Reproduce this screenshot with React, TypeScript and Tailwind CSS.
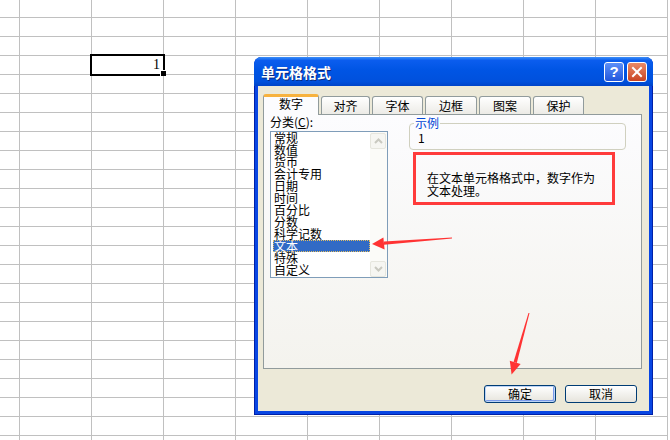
import React from 'react';

const categories = ['常规', '数值', '货币', '会计专用', '日期', '时间', '百分比', '分数', '科学记数', '文本', '特殊', '自定义'];

const tabs = [
  { label: '数字', w: 'w-[56px]', active: true },
  { label: '对齐', w: 'w-[49px]' },
  { label: '字体', w: 'w-[51px]' },
  { label: '边框', w: 'w-[52px]' },
  { label: '图案', w: 'w-[52px]' },
  { label: '保护', w: 'w-[51px]' },
];

const SheetGrid = () => (
  <div className="grid grid-cols-[20px_repeat(9,72px)] grid-rows-[18px_repeat(23,19px)]">
    {Array.from({ length: 240 }).map((_, i) => (
      <div key={i} className="border-r border-b border-[#c0c0c0]" />
    ))}
  </div>
);

const Selection = () => (
  <div className="absolute left-[90px] top-[54px] w-[75px] h-[22px] border-2 border-black flex items-center justify-end pr-[3px] font-['Liberation_Serif',serif] text-[14px] leading-none">
    1
    <div className="absolute left-[68px] top-[14px] w-[6px] h-[6px] bg-black border-l border-t border-white" />
  </div>
);

const ScrollBtn = ({ up }: { up?: boolean }) => (
  <div className="w-[16px] h-[16px] rounded-[2px] border border-[#e6e6de] bg-[#f6f6f2] flex items-center justify-center">
    <svg width="9" height="6" viewBox="0 0 9 6">
      <polyline
        points={up ? '1,5 4.5,1.5 8,5' : '1,1 4.5,4.5 8,1'}
        fill="none"
        stroke="#c9c9c0"
        strokeWidth="2"
      />
    </svg>
  </div>
);

const XpButton = ({ label, primary }: { label: string; primary?: boolean }) => (
  <div
    className={
      primary
        ? 'w-[72px] h-[18px] rounded-[3px] border border-[#003c74] bg-linear-to-b from-white to-[#e6e4dc] flex items-center justify-center text-[12px] leading-none shadow-[inset_0_0_0_1px_#bcd4f6,inset_-1px_-1px_0_1px_#7b9bea]'
        : 'w-[72px] h-[18px] rounded-[3px] border border-[#003c74] bg-linear-to-b from-white to-[#e6e4dc] flex items-center justify-center text-[12px] leading-none'
    }
  >
    {label}
  </div>
);

const TitleBar = () => (
  <div className="h-[29px] rounded-t-[7px] flex items-center pl-[7px] pr-[6px] gap-[3px] bg-[linear-gradient(to_bottom,#3d8ff8_0%,#0b5dee_12%,#0055e4_45%,#0050dc_85%,#0044c8_100%)]">
    <span className="flex-1 text-white font-bold text-[14px] leading-none [text-shadow:1px_1px_0_#0a2a80]">单元格格式</span>
    <div className="w-[20px] h-[20px] rounded-[3px] border border-white bg-linear-to-b from-[#5d8ff8] to-[#2156dc] flex items-center justify-center text-white font-bold text-[15px] leading-none font-['Liberation_Sans',sans-serif]">
      ?
    </div>
    <div className="w-[20px] h-[20px] rounded-[3px] border border-white bg-linear-to-b from-[#ea8a66] to-[#c94320] flex items-center justify-center">
      <svg width="12" height="12" viewBox="0 0 12 12">
        <path d="M2 2 L10 10 M10 2 L2 10" stroke="white" strokeWidth="2" strokeLinecap="square" />
      </svg>
    </div>
  </div>
);

const FormatDialog = () => (
  <div className="absolute left-[254px] top-[57px] w-[399px] h-[358px] flex flex-col rounded-t-[8px] bg-[#0846e3] shadow-[inset_1px_0_0_#0020a8,inset_-1px_0_0_#0020a8,inset_0_-1px_0_#0020a8] font-['Noto_Sans_CJK_SC',sans-serif] text-black">
    <TitleBar />
    <div className="flex-1 px-[4px] pb-[4px]">
      <div className="h-full bg-[#ece9d8] flex flex-col">
        {/* tab strip */}
        <div className="mt-[8px] ml-[5px] h-[20px] flex items-end gap-[2px]">
          {tabs.map((t) =>
            t.active ? (
              <div
                key={t.label}
                className={`${t.w} relative z-10 -mb-px h-[21px] rounded-t-[3px] border-x border-[#919b9c] border-t-[3px] border-t-[#f7b23e] bg-[#fcfcfe] text-center text-[12px] leading-[14px]`}
              >
                {t.label}
              </div>
            ) : (
              <div
                key={t.label}
                className={`${t.w} h-[18px] rounded-t-[3px] border border-b-0 border-[#919b9c] bg-linear-to-b from-white to-[#ecebe6] text-center text-[12px] leading-[17px]`}
              >
                {t.label}
              </div>
            )
          )}
        </div>

        {/* panel */}
        <div className="ml-[5px] w-[379px] h-[255px] border border-[#919b9c] bg-linear-to-b from-[#fcfcfe] to-[#f4f3ee] flex items-start">
          <div className="ml-[6px] mt-[1px] flex flex-col">
            <div className="text-[12px] leading-[12px]">
              分类(<span className="underline">C</span>):
            </div>
            <div className="mt-[3px] w-[118px] h-[147px] border border-[#7f9db9] bg-white flex">
              <div className="flex-1 pl-[1px]">
                {categories.map((c) =>
                  c === '文本' ? (
                    <div
                      key={c}
                      className="h-[12px] ml-[1px] pl-[1px] text-[12px] leading-[12px] bg-[#316ac5] text-white outline-1 outline-dotted outline-[#e2bd62] -outline-offset-1"
                    >
                      {c}
                    </div>
                  ) : (
                    <div key={c} className="h-[12px] pl-[2px] text-[12px] leading-[12px]">
                      {c}
                    </div>
                  )
                )}
              </div>
              <div className="w-[17px] flex flex-col justify-between pt-[1px] pb-[0px] bg-[#fbfbf8]">
                <ScrollBtn up />
                <ScrollBtn />
              </div>
            </div>
          </div>

          <div className="ml-[21px] mt-[8px] w-[217px] flex flex-col">
            <div className="h-[27px] border border-[#d0d0bf] rounded-[4px]">
              <span className="block w-fit -mt-[7px] ml-[4px] px-[1px] bg-[#fcfcfe] text-[#0046d5] text-[12px] leading-[12px]">
                示例
              </span>
              <div className="mt-[3px] pl-[8px] text-[12px] leading-[12px]">1</div>
            </div>
            <div className="mt-[2px] ml-[4px] w-[202px] h-[53px] border-[3px] border-[#ff3b3b] pt-[16px] pl-[11px] text-[12px] leading-[13px]">
              在文本单元格格式中，数字作为
              <br />
              文本处理。
            </div>
          </div>
        </div>

        {/* buttons */}
        <div className="mt-[16px] pr-[12px] flex justify-end gap-[9px]">
          <XpButton label="确定" primary />
          <XpButton label="取消" />
        </div>
      </div>
    </div>
  </div>
);

const Annotations = () => (
  <svg className="absolute inset-0 pointer-events-none" width="670" height="440" viewBox="0 0 670 440">
    <polygon points="452,237.4 452,238.6 384,244.8 384,241.4" fill="#ff3333" />
    <polygon points="372,244 384.6,249.5 383.4,237.4" fill="#ff3333" />
    <polygon points="529.5,313.1 528.5,312.9 513.6,361.8 516.8,363" fill="#ff3333" />
    <polygon points="511.6,374.5 520.6,364 509.8,360.8" fill="#ff3333" />
  </svg>
);

export default function App() {
  return (
    <div className="relative w-[670px] h-[440px] overflow-hidden bg-white">
      <SheetGrid />
      <Selection />
      <FormatDialog />
      <Annotations />
    </div>
  );
}
